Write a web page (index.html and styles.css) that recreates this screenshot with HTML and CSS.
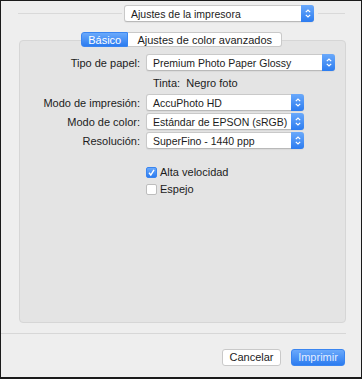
FILE: index.html
```html
<!DOCTYPE html>
<html lang="es">
<head>
  <meta charset="UTF-8">
  <title>Ajustes de la impresora</title>
  <link rel="stylesheet" href="styles.css">
</head>
<body>
  <div class="window">
    <!-- Selector de panel -->
    <div class="top">
      <span class="line"></span>
      <div class="popup top-popup">
        <span class="value">Ajustes de la impresora</span>
        <span class="arrows"><svg width="6" height="9" viewBox="0 0 6 9"><path d="M0.8 3.2 L3 1 L5.2 3.2 M0.8 5.8 L3 8 L5.2 5.8" fill="none" stroke="#fff" stroke-width="1.2"/></svg></span>
      </div>
      <span class="line"></span>
    </div>

    <!-- Pestañas -->
    <div class="tabs">
      <span class="tab active">Básico</span>
      <span class="tab">Ajustes de color avanzados</span>
    </div>

    <div class="panel">
      <div class="form">
        <label>Tipo de papel:</label>
        <div class="popup wide">
          <span class="value">Premium Photo Paper Glossy</span>
          <span class="arrows"><svg width="6" height="9" viewBox="0 0 6 9"><path d="M0.8 3.2 L3 1 L5.2 3.2 M0.8 5.8 L3 8 L5.2 5.8" fill="none" stroke="#fff" stroke-width="1.2"/></svg></span>
        </div>

        <span></span>
        <div class="ink">Tinta:&nbsp; Negro foto</div>

        <label>Modo de impresión:</label>
        <div class="popup">
          <span class="value">AccuPhoto HD</span>
          <span class="arrows"><svg width="6" height="9" viewBox="0 0 6 9"><path d="M0.8 3.2 L3 1 L5.2 3.2 M0.8 5.8 L3 8 L5.2 5.8" fill="none" stroke="#fff" stroke-width="1.2"/></svg></span>
        </div>

        <label>Modo de color:</label>
        <div class="popup">
          <span class="value">Estándar de EPSON (sRGB)</span>
          <span class="arrows"><svg width="6" height="9" viewBox="0 0 6 9"><path d="M0.8 3.2 L3 1 L5.2 3.2 M0.8 5.8 L3 8 L5.2 5.8" fill="none" stroke="#fff" stroke-width="1.2"/></svg></span>
        </div>

        <label>Resolución:</label>
        <div class="popup">
          <span class="value">SuperFino - 1440 ppp</span>
          <span class="arrows"><svg width="6" height="9" viewBox="0 0 6 9"><path d="M0.8 3.2 L3 1 L5.2 3.2 M0.8 5.8 L3 8 L5.2 5.8" fill="none" stroke="#fff" stroke-width="1.2"/></svg></span>
        </div>
      </div>

      <div class="checks">
        <div class="check">
          <span class="box checked"><svg width="9" height="9" viewBox="0 0 9 9"><path d="M2 4.8 L3.8 7 L7 1.8" fill="none" stroke="#fff" stroke-width="1.4"/></svg></span>
          <span>Alta velocidad</span>
        </div>
        <div class="check">
          <span class="box"></span>
          <span>Espejo</span>
        </div>
      </div>
    </div>

    <div class="separator"></div>

    <!-- Botones -->
    <div class="buttons">
      <span class="button cancel">Cancelar</span>
      <span class="button print">Imprimir</span>
    </div>
  </div>
</body>
</html>
```

FILE: styles.css
```css
/* Estilos generales */
* {
  margin: 0;
  padding: 0;
  box-sizing: border-box;
}

body {
  font-family: "Liberation Sans", Arial, sans-serif;
  font-size: 11px;
  color: #1c1c1c;
}

.window {
  width: 362px;
  height: 379px;
  border: 1px solid #1a1a1a;
  border-bottom-width: 2px;
  background-color: #eeeeee;
  display: flex;
  flex-direction: column;
}

/* Selector superior */
.top {
  display: flex;
  align-items: center;
  gap: 2px;
  padding: 4px 16px 0 17px;
}

.top .line {
  flex: 1;
  height: 1px;
  background-color: #d9d9d9;
}

.top .line:last-child {
  flex: 0 0 27px;
  margin-left: 2px;
}

.popup {
  display: flex;
  align-items: center;
  height: 17px;
  background-color: #fff;
  border: 1px solid #c9c9c9;
  border-bottom-color: #b9b9b9;
  border-radius: 3px;
  box-shadow: 0 1px 1px rgba(0, 0, 0, 0.05);
}

.popup .value {
  flex: 1;
  padding-left: 6px;
  font-size: 10.5px;
  white-space: nowrap;
}

.popup .arrows {
  display: flex;
  align-items: center;
  justify-content: center;
  width: 13px;
  height: 17px;
  margin: -1px -1px -1px 0;
  background: linear-gradient(#6aa9fb, #2c7cf0);
  border-radius: 0 3px 3px 0;
}

.top-popup {
  width: 190px;
}

/* Pestañas */
.tabs {
  display: flex;
  margin: 10px 0 -7px 80px;
  width: 201px;
  position: relative;
  z-index: 1;
}

.tab {
  height: 15px;
  line-height: 14px;
  padding: 0 9px;
  background-color: #fff;
  border: 1px solid #c9c9c9;
  border-left: none;
  border-radius: 0 3px 3px 0;
  white-space: nowrap;
}

.tab.active {
  width: 52px;
  text-align: center;
  padding: 0;
  color: #fff;
  background: linear-gradient(#6aa9fb, #2c7cf0);
  border: 1px solid #3a85f0;
  border-radius: 3px 0 0 3px;
}

.panel {
  margin-left: 18px;
  width: 327px;
  height: 283px;
  background-color: #e4e4e4;
  border: 1px solid #d6d6d6;
  border-radius: 4px;
  padding-top: 13px;
}

/* Formulario */
.form {
  display: grid;
  grid-template-columns: 120px 189px;
  column-gap: 6px;
  row-gap: 2px;
  align-items: center;
}

.form label {
  text-align: right;
  white-space: nowrap;
}

.form .popup {
  width: 158px;
}

.form .popup.wide {
  width: 189px;
}

.ink {
  padding: 4px 0 3px 7px;
}

.checks {
  margin: 17px 0 0 126px;
  display: flex;
  flex-direction: column;
  gap: 5px;
}

.check {
  display: flex;
  align-items: center;
  gap: 3px;
}

.check .box {
  display: flex;
  align-items: center;
  justify-content: center;
  width: 11px;
  height: 11px;
  background-color: #fff;
  border: 1px solid #bdbdbd;
  border-radius: 2px;
}

.check .box.checked {
  background: linear-gradient(#6aa9fb, #2c7cf0);
  border-color: #3a85f0;
}

.separator {
  margin-top: 10px;
  width: 345px;
  height: 1px;
  background-color: #d7d7d7;
}

/* Botones */
.buttons {
  display: flex;
  justify-content: flex-end;
  gap: 10px;
  padding: 15px 16px 0 0;
}

.button {
  height: 17px;
  line-height: 15px;
  text-align: center;
  border-radius: 3px;
}

.button.cancel {
  width: 59px;
  background-color: #fff;
  border: 1px solid #c9c9c9;
}

.button.print {
  width: 54px;
  color: #e3edff;
  background: linear-gradient(#6aa9fb, #2c7cf0);
  border: 1px solid #3a85f0;
}
```
